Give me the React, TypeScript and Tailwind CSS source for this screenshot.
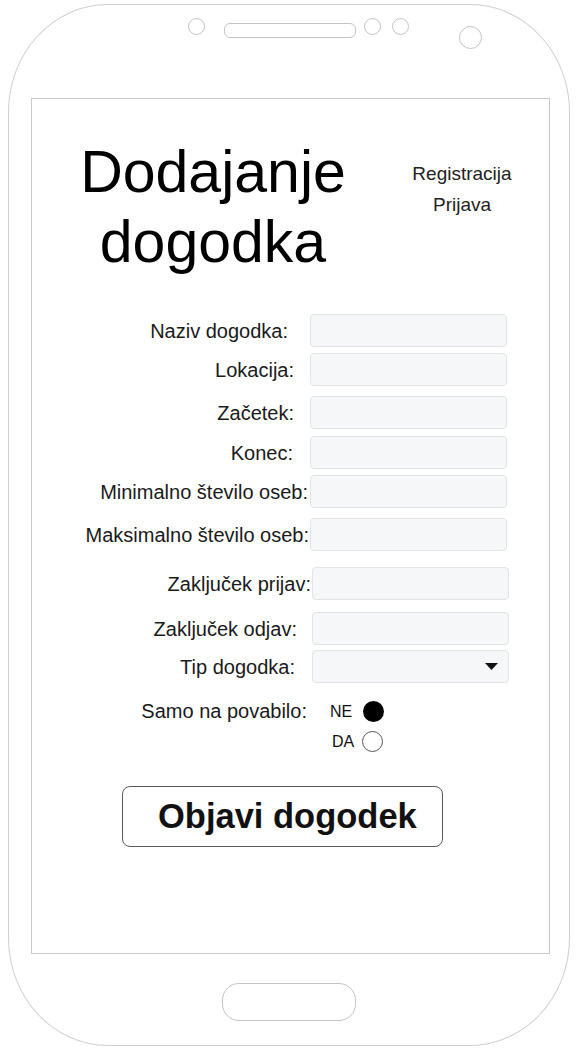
const rows = [
  { label: "Naziv dogodka:", right: 288, left: 310, mt: 37 },
  { label: "Lokacija:", right: 294, left: 310, mt: 6 },
  { label: "Začetek:", right: 294, left: 310, mt: 10 },
  { label: "Konec:", right: 293, left: 310, mt: 7 },
  { label: "Minimalno število oseb:", right: 308, left: 310, mt: 6 },
  { label: "Maksimalno število oseb:", right: 309, left: 310, mt: 10 },
  { label: "Zaključek prijav:", right: 311, left: 312, mt: 16 },
  { label: "Zaključek odjav:", right: 297, left: 312, mt: 12 },
];

function Field({ label, right, left, mt, select }: { label: string; right: number; left: number; mt: number; select?: boolean }) {
  return (
    <div className="flex items-center h-[33px]" style={{ marginTop: mt }}>
      <span className="text-right text-[20px] leading-[24px] text-[#1a1a1a] whitespace-nowrap" style={{ width: right - 32 }}>
        {label}
      </span>
      <div
        className="h-[33px] w-[197px] rounded-[4px] border border-[#e1e3e6] bg-[#f6f7f9] flex items-center justify-end pr-[10px]"
        style={{ marginLeft: left - right }}
      >
        {select && (
          <svg width="13" height="7" viewBox="0 0 13 7">
            <path d="M0 0 H13 L6.5 7 Z" fill="#111" />
          </svg>
        )}
      </div>
    </div>
  );
}

export default function App() {
  return (
    <div className="w-[577px] h-[1048px] bg-white pt-[4px] pl-[8px] font-['Liberation_Sans',Arial,sans-serif]">
      <div className="w-[562px] h-[1042px] rounded-[100px/108px] border border-[#cfcfcf] flex flex-col">
        {/* top sensors */}
        <div className="flex items-start mt-[13px] ml-[179px]">
          <div className="w-[17px] h-[17px] rounded-full border border-[#c4c4c4]" />
          <div className="ml-[19px] mt-[5px] w-[132px] h-[15px] rounded-[6px] border border-[#c4c4c4]" />
          <div className="ml-[8px] w-[17px] h-[17px] rounded-full border border-[#c4c4c4]" />
          <div className="ml-[11px] w-[17px] h-[17px] rounded-full border border-[#c4c4c4]" />
          <div className="ml-[50px] mt-[8px] w-[23px] h-[23px] rounded-full border border-[#c4c4c4]" />
        </div>

        {/* screen */}
        <div className="ml-[22px] mt-[49px] w-[519px] h-[856px] border border-[#c8c8c8] flex flex-col">
          <div className="flex items-start pt-[38px]">
            <h1 className="w-[362px] text-center text-[59px] leading-[70px] text-black font-normal">
              Dodajanje
              <br />
              dogodka
            </h1>
            <div className="w-[136px] mt-[21px] text-center text-[19px] leading-[31px] text-[#222]">
              <div>Registracija</div>
              <div>Prijava</div>
            </div>
          </div>

          {rows.map((r) => (
            <Field key={r.label} {...r} />
          ))}
          <Field label="Tip dogodka:" right={295} left={312} mt={5} select />

          <div className="flex items-start mt-[18px]">
            <span className="w-[275px] text-right text-[20px] leading-[21px] text-[#1a1a1a]">Samo na povabilo:</span>
            <div className="flex flex-col ml-[23px]">
              <div className="flex items-center h-[21px]">
                <span className="text-[16px] leading-[21px] text-[#111]">NE</span>
                <div className="ml-[11px] w-[21px] h-[21px] rounded-full bg-black" />
              </div>
              <div className="flex items-center h-[21px] mt-[9px]">
                <span className="ml-[2px] text-[16px] leading-[21px] text-[#111]">DA</span>
                <div className="ml-[8px] w-[21px] h-[21px] rounded-full border-[1.5px] border-[#555] bg-white" />
              </div>
            </div>
          </div>

          <button className="ml-[90px] mt-[34px] w-[321px] h-[61px] rounded-[8px] border border-[#5a5a5a] bg-white flex items-center pl-[35px] text-[34.5px] font-bold text-[#111]">
            Objavi dogodek
          </button>
        </div>

        {/* home button */}
        <div className="ml-[213px] mt-[29px] w-[134px] h-[38px] rounded-[17px] border border-[#c4c4c4]" />
      </div>
    </div>
  );
}
